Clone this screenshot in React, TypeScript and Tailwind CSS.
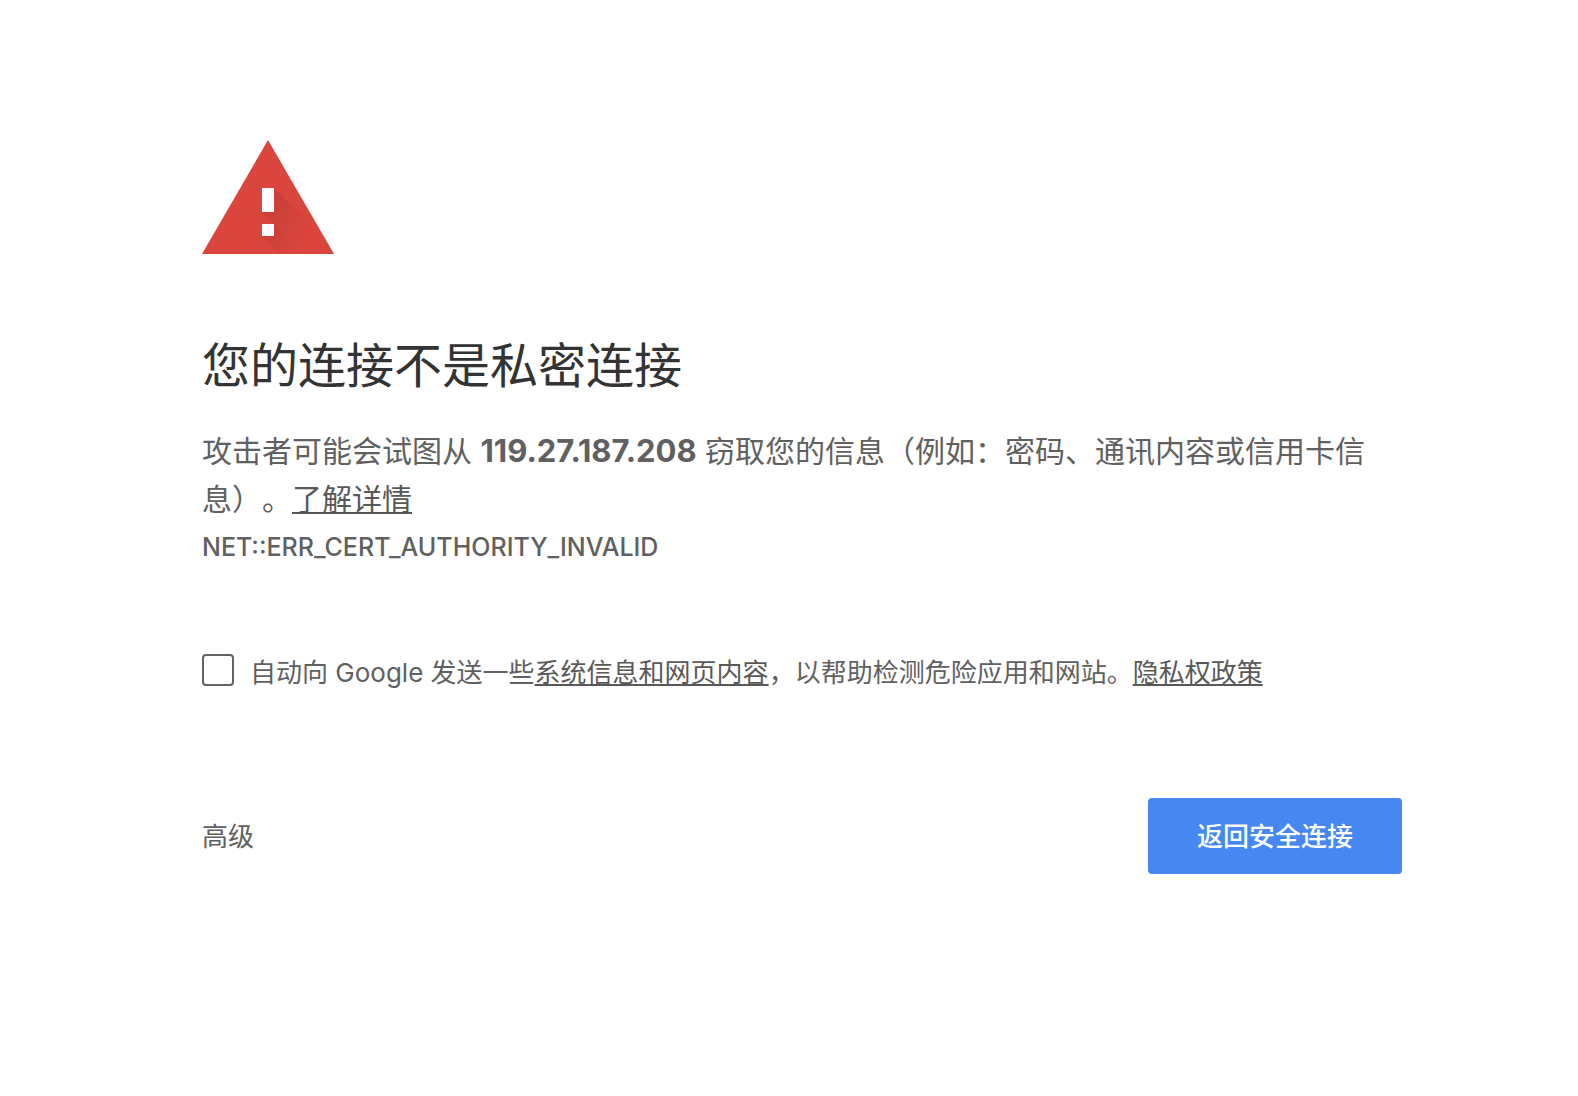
import { useState } from "react";
import type { ReactNode } from "react";

interface TextLinkProps {
  href: string;
  children: ReactNode;
}

function TextLink({ href, children }: TextLinkProps) {
  return (
    <a
      href={href}
      className="text-[#585858] underline decoration-2 underline-offset-2 [text-decoration-skip-ink:none]"
    >
      {children}
    </a>
  );
}

function WarningIcon() {
  return (
    <svg width="132" height="114" viewBox="0 0 132 114" role="img" aria-label="警告" className="block">
      <defs>
        <linearGradient id="shade" gradientUnits="userSpaceOnUse" x1="62" y1="54" x2="104" y2="96">
          <stop offset="0" stopColor="#b53a33" stopOpacity="0.65" />
          <stop offset="1" stopColor="#c43d35" stopOpacity="0" />
        </linearGradient>
        <linearGradient id="shade-dot" gradientUnits="userSpaceOnUse" x1="64" y1="88" x2="90" y2="114">
          <stop offset="0" stopColor="#b53a33" stopOpacity="0.65" />
          <stop offset="1" stopColor="#c43d35" stopOpacity="0" />
        </linearGradient>
      </defs>
      <path d="M66 0 132 114H0z" fill="#da453d" />
      {/* long shadows */}
      <path d="M72 48 124 100 132 114H102L60 72z" fill="url(#shade)" />
      <path d="M72 84 102 114H78L60 96z" fill="url(#shade-dot)" />
      <path d="M60 48h12v24H60zM60 84h12v12H60z" fill="#fff" />
    </svg>
  );
}

export default function App() {
  const [reporting, setReporting] = useState(false);

  return (
    <main
      lang="zh-CN"
      className="min-h-screen bg-white pt-[140px] pr-44 pb-20 pl-[202px] font-['Inter','Noto_Sans_CJK_SC',sans-serif] text-[#606060] [text-spacing-trim:space-all]"
    >
      <WarningIcon />

      <h1 className="mt-[82px] text-5xl leading-[60px] text-[#333]">您的连接不是私密连接</h1>

      <p className="mt-[31px] text-[30px] leading-12">
        攻击者可能会试图从 <strong className="text-[31px] font-bold">119.27.187.208</strong>{" "}
        窃取您的信息（例如：密码、通讯内容或信用卡信息）。<TextLink href="#details">了解详情</TextLink>
      </p>
      <p className="text-[25px] leading-12 font-medium">NET::ERR_CERT_AUTHORITY_INVALID</p>

      <div className="mt-[75px] flex items-start gap-4 text-[26px] leading-12">
        <input
          id="reporting"
          type="checkbox"
          checked={reporting}
          onChange={(e) => setReporting(e.target.checked)}
          className="mt-2 size-8 shrink-0 appearance-none rounded-sm border-2 border-[#646464] bg-white checked:bg-[#4688f1]"
        />
        <label htmlFor="reporting" className="pt-[3px]">
          自动向 Google 发送一些<TextLink href="#system">系统信息和网页内容</TextLink>
          ，以帮助检测危险应用和网站。<TextLink href="#privacy">隐私权政策</TextLink>
        </label>
      </div>

      <div className="mt-[101px] flex items-center justify-between text-[26px]">
        <button type="button" className="pt-0.5 leading-9">
          高级
        </button>
        <button
          type="button"
          className="rounded-sm bg-[#4688f1] px-[49px] pt-[21px] pb-[19px] leading-9 font-medium text-white"
        >
          返回安全连接
        </button>
      </div>
    </main>
  );
}
